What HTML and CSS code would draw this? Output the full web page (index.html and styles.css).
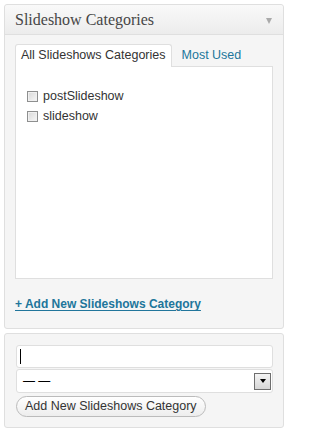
FILE: index.html
```html
<!DOCTYPE html>
<html>
<head>
<meta charset="utf-8">
<link rel="stylesheet" href="styles.css">
</head>
<body>
<div class="postbox">
  <div class="hndle">
    <h3 class="title">Slideshow Categories</h3>
    <span class="toggle"></span>
  </div>
  <div class="inside">
    <ul class="tabs">
      <li class="tab active">All Slideshows Categories</li>
      <li class="tab">Most Used</li>
    </ul>
    <div class="panel">
      <ul class="checklist">
        <li><span class="cb"></span><span class="lbl">postSlideshow</span></li>
        <li><span class="cb"></span><span class="lbl">slideshow</span></li>
      </ul>
    </div>
    <a class="addlink">+ Add New Slideshows Category</a>
  </div>
</div>
<div class="postbox addbox">
  <div class="field"><span class="caret"></span></div>
  <div class="select">
    <span class="seltext">— —</span>
    <span class="selbtn"><span class="tri"></span></span>
  </div>
  <div class="btnrow"><span class="button">Add New Slideshows Category</span></div>
</div>
</body>
</html>
```
FILE: styles.css
```css
* {
  box-sizing: border-box;
}
html, body {
  margin: 0;
  padding: 0;
  background: #ffffff;
}
body {
  padding: 4px 0 0 4px;
  font-family: "Liberation Sans", Arial, sans-serif;
  font-size: 12.5px;
  color: #333333;
}
ul {
  list-style: none;
  margin: 0;
  padding: 0;
}
.postbox {
  width: 280px;
  border: 1px solid #dfdfdf;
  border-radius: 3px;
  background: #f5f5f5;
}
.hndle {
  height: 30px;
  border-bottom: 1px solid #dfdfdf;
  background: linear-gradient(#f9f9f9, #ececec);
  display: flex;
  align-items: center;
  justify-content: space-between;
  padding: 0 11px 0 10px;
  border-radius: 3px 3px 0 0;
}
.title {
  margin: 0;
  font-family: "Liberation Serif", "Times New Roman", serif;
  font-weight: normal;
  font-size: 16px;
  color: #464646;
  padding-top: 1px;
}
.toggle {
  width: 0;
  height: 0;
  border-left: 3.5px solid transparent;
  border-right: 3.5px solid transparent;
  border-top: 6px solid #aaaaaa;
  margin-top: 2px;
}
.inside {
  padding: 9px 10px 17px 10px;
}
.tabs {
  display: flex;
  align-items: flex-end;
  gap: 4px;
}
.tab {
  height: 22px;
  line-height: 21px;
  padding: 0 5px;
  color: #21759b;
  border: 1px solid transparent;
  border-bottom: none;
}
.tab.active {
  color: #333333;
  background: #ffffff;
  border-color: #dfdfdf;
  border-radius: 3px 3px 0 0;
  position: relative;
  margin-bottom: -1px;
  height: 23px;
}
.panel {
  background: #ffffff;
  border: 1px solid #dfdfdf;
  height: 213px;
  padding: 19px 11px 0 11px;
}
.checklist li {
  display: flex;
  align-items: center;
  height: 20px;
}
.cb {
  width: 11px;
  height: 11px;
  border: 1px solid #8e8f8f;
  background: linear-gradient(135deg, #d8d8d8, #f7f7f7);
  box-shadow: inset 0 0 0 1px #f0f0f0;
  margin-right: 5px;
}
.lbl {
  color: #333333;
}
.addlink {
  display: inline-block;
  margin-top: 18px;
  font-weight: bold;
  font-size: 12px;
  color: #21759b;
  text-decoration: underline;
  text-underline-offset: 2px;
}
.addbox {
  margin-top: 4px;
  height: 95px;
  padding: 11px 10px 0 11px;
  display: flex;
  flex-direction: column;
}
.field {
  height: 23px;
  flex: none;
  background: #ffffff;
  border: 1px solid #dfdfdf;
  border-radius: 3px;
  display: flex;
  align-items: center;
  padding-left: 3px;
}
.caret {
  width: 1px;
  height: 15px;
  background: #000000;
}
.select {
  margin-top: 1px;
  height: 24px;
  flex: none;
  background: #ffffff;
  border: 1px solid #dfdfdf;
  border-radius: 3px;
  display: flex;
  align-items: center;
  justify-content: space-between;
  padding: 0 1px 0 6px;
}
.seltext {
  font-size: 12px;
  color: #000000;
}
.selbtn {
  width: 17px;
  height: 17px;
  border: 1px solid #6e6e6e;
  background: linear-gradient(#f4f4f4, #d6d6d6);
  display: flex;
  align-items: center;
  justify-content: center;
}
.tri {
  width: 0;
  height: 0;
  border-left: 3.5px solid transparent;
  border-right: 3.5px solid transparent;
  border-top: 4px solid #000000;
}
.btnrow {
  margin-top: 3px;
  display: flex;
  flex: none;
}
.button {
  height: 21px;
  line-height: 19px;
  padding: 0 8px;
  border: 1px solid #bbbbbb;
  border-radius: 11px;
  background: linear-gradient(#ffffff, #ededed);
  color: #333333;
}
```
